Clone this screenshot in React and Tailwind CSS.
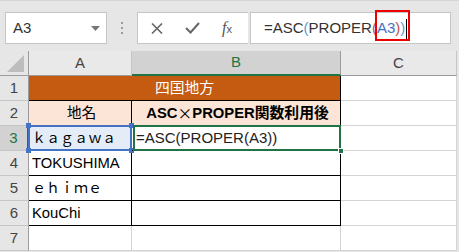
import React from 'react';

const font = "font-['Liberation_Sans','Noto_Sans_CJK_JP',sans-serif]";

const RowHead = ({ n, active }) => (
  <div
    className={
      active
        ? 'h-[25px] bg-[#d2d2d2] border-b border-[#c6c6c6] border-r-2 border-r-[#217346] flex items-center justify-center text-[15px] text-[#217346]'
        : 'h-[25px] bg-[#e6e6e6] border-b border-[#c6c6c6] border-r border-r-[#9b9b9b] flex items-center justify-center text-[15px] text-[#444]'
    }
  >
    {n}
  </div>
);

const CCell = () => <div className="h-[25px] bg-white border-r border-b border-[#d4d4d4]" />;
const Rest = () => <div className="h-[25px] bg-[#e6e6e6]" />;

const Cell = ({ children, className = '' }) => (
  <div className={`h-[25px] border-r border-b border-black flex items-center pl-[3px] text-[14.8px] text-black ${className}`}>
    {children}
  </div>
);

export default function App() {
  return (
    <div className={`w-[459px] h-[252px] overflow-hidden bg-[#e6e6e6] ${font}`}>
      {/* formula bar */}
      <div className="h-[51px] flex items-start pt-[11px] border-t border-[#d6d6d6]">
        <div className="ml-[5px] w-[102px] h-[32px] bg-white border border-[#c6c6c6] flex items-center justify-between pl-[7px] pr-[6px]">
          <span className="text-[15px] text-[#333]">A3</span>
          <svg width="9" height="5" viewBox="0 0 9 5">
            <path d="M0 0 H9 L4.5 5 Z" fill="#777" />
          </svg>
        </div>
        <div className="w-[30px] h-[32px] flex flex-col items-center justify-center gap-[3px]">
          <span className="w-[2px] h-[2px] bg-[#9a9a9a]" />
          <span className="w-[2px] h-[2px] bg-[#9a9a9a]" />
          <span className="w-[2px] h-[2px] bg-[#9a9a9a]" />
        </div>
        <div className="w-[111px] h-[32px] bg-white border-y border-l border-[#c6c6c6] flex items-center pl-[13px] gap-[22px]">
          <svg width="12" height="11" viewBox="0 0 12 11">
            <path d="M1 0.5 L11 10.5 M11 0.5 L1 10.5" stroke="#666" strokeWidth="1.6" />
          </svg>
          <svg width="15" height="12" viewBox="0 0 15 12">
            <path d="M1 6 L5.5 10.5 L14 1" stroke="#666" strokeWidth="2" fill="none" />
          </svg>
          <span className="font-['Liberation_Serif',serif] italic text-[16px] text-[#555] leading-none">
            f<span className="text-[11px] not-italic font-['Liberation_Sans',sans-serif]">x</span>
          </span>
        </div>
        <div className="ml-[2px] w-[201px] h-[32px] bg-white border border-[#c6c6c6] flex items-center pl-[13px] text-[15px] text-[#333]">
          <span>=ASC</span>
          <span className="text-[#5b9bd5]">(</span>
          <span>PROPER</span>
          <span className="text-[#c0504d]">(</span>
          <span className="relative">
            <span className="text-[#4472c4]">A3</span>
            <span className="text-[#c0504d]">)</span>
            <span className="text-[#5b9bd5]">)</span>
            <span className="inline-block w-[1px] h-[20px] bg-black align-middle ml-[1px]" />
            <span className="absolute left-[-2px] top-[-7px] w-[35px] h-[31px] border-2 border-[#ee0000]" />
          </span>
        </div>
      </div>

      {/* sheet */}
      <div className="grid grid-cols-[29px_103px_209px_116px_2px] bg-white">
        {/* column headers */}
        <div className="h-[25px] bg-[#e6e6e6] border-r border-b border-[#9b9b9b] flex items-end justify-end pr-[4px] pb-[3px]">
          <svg width="17" height="17" viewBox="0 0 17 17">
            <path d="M17 0 V17 H0 Z" fill="#bdbdbd" />
          </svg>
        </div>
        <div className="h-[25px] bg-[#e9e9e9] border-r border-[#c6c6c6] border-b border-b-[#9b9b9b] flex items-center justify-center text-[15px] text-[#444]">A</div>
        <div className="h-[25px] bg-[#d2d2d2] border-r border-[#9b9b9b] border-b-2 border-b-[#217346] flex items-center justify-center text-[15px] text-[#217346]">B</div>
        <div className="h-[25px] bg-[#e9e9e9] border-r border-[#c6c6c6] border-b border-b-[#9b9b9b] flex items-center justify-center text-[15px] text-[#444]">C</div>
        <Rest />

        {/* row 1 */}
        <RowHead n="1" />
        <div className="col-span-2 h-[25px] bg-[#c55a11] border-r border-b border-black flex items-center justify-center text-[14.8px] text-white">
          四国地方
        </div>
        <CCell />
        <Rest />

        {/* row 2 */}
        <RowHead n="2" />
        <Cell className="bg-[#fce4d6] justify-center pl-0">地名</Cell>
        <Cell className="bg-[#fce4d6] justify-center pl-0 font-bold">
          ASC<span className="font-['Noto_Sans_CJK_JP',sans-serif] font-normal">×</span>PROPER関数利用後
        </Cell>
        <CCell />
        <Rest />

        {/* row 3 */}
        <RowHead n="3" active />
        <div className="relative h-[25px] bg-[#e4ecf7] border-r border-b border-black flex items-center pl-[3px] text-[14px] text-black">
          ｋａｇａｗａ
          <span className="absolute inset-x-[-1px] top-[-1px] bottom-[-1px] border-2 border-[#4472c4]" />
          <span className="absolute left-[-3px] top-[-3px] w-[5px] h-[5px] bg-[#4472c4]" />
          <span className="absolute right-[-3px] top-[-3px] w-[5px] h-[5px] bg-[#4472c4]" />
          <span className="absolute left-[-3px] bottom-[-3px] w-[5px] h-[5px] bg-[#4472c4]" />
          <span className="absolute right-[-3px] bottom-[-3px] w-[5px] h-[5px] bg-[#4472c4]" />
        </div>
        <div className="relative h-[25px] border-r border-b border-black flex items-center pl-[4px] text-[15px] text-[#222]">
          =ASC(PROPER(A3))
          <span className="absolute left-[1px] right-[-1px] top-[-1px] bottom-[-1px] border-2 border-[#217346]" />
          <span className="absolute right-[-4px] bottom-[-4px] w-[6px] h-[6px] bg-[#217346] border border-white" />
        </div>
        <CCell />
        <Rest />

        {/* row 4 */}
        <RowHead n="4" />
        <Cell>TOKUSHIMA</Cell>
        <Cell />
        <CCell />
        <Rest />

        {/* row 5 */}
        <RowHead n="5" />
        <Cell className="text-[14px]">ｅｈｉｍｅ</Cell>
        <Cell />
        <CCell />
        <Rest />

        {/* row 6 */}
        <RowHead n="6" />
        <Cell>KouChi</Cell>
        <Cell />
        <CCell />
        <Rest />

        {/* row 7 */}
        <RowHead n="7" />
        <CCell />
        <CCell />
        <CCell />
        <Rest />
      </div>
    </div>
  );
}
